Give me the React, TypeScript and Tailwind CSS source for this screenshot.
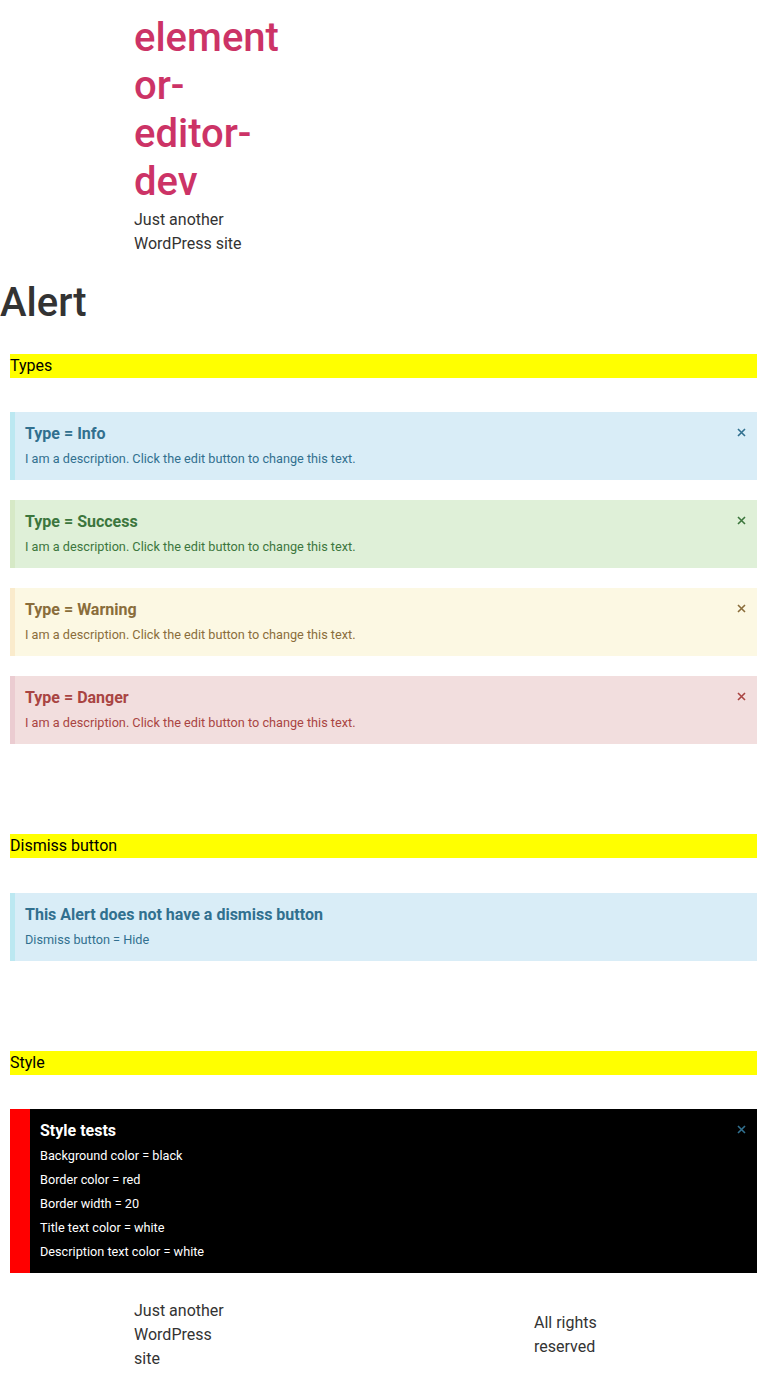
import React from 'react';

type AlertKind = 'info' | 'success' | 'warning' | 'danger';

const kinds: Record<AlertKind, { box: string; text: string }> = {
  info: { box: 'bg-[#d9edf7] border-[#bce8f1]', text: 'text-[#31708f]' },
  success: { box: 'bg-[#dff0d8] border-[#d6e9c6]', text: 'text-[#3c763d]' },
  warning: { box: 'bg-[#fcf8e3] border-[#faebcc]', text: 'text-[#8a6d3b]' },
  danger: { box: 'bg-[#f2dede] border-[#ebccd1]', text: 'text-[#a94442]' },
};

function Dismiss({ color }: { color: string }) {
  return (
    <button className={`absolute right-[11px] top-[16px] ${color}`} aria-label="Dismiss this alert.">
      <svg width="9" height="9" viewBox="0 0 9 9" className="block">
        <path d="M1 1 L8 8 M8 1 L1 8" stroke="currentColor" strokeWidth="1.6" strokeLinecap="butt" />
      </svg>
    </button>
  );
}

function Alert({
  kind,
  title,
  description,
  dismiss = true,
}: {
  kind: AlertKind;
  title: string;
  description: string;
  dismiss?: boolean;
}) {
  const k = kinds[kind];
  return (
    <div className={`relative mx-[10px] h-[68px] border-l-[5px] pl-[10px] pt-[11px] ${k.box} ${k.text}`}>
      <div className="text-[16px] font-bold leading-[22px]">{title}</div>
      <div className="mt-[4px] text-[12.7px] leading-[20px]">{description}</div>
      {dismiss && <Dismiss color={k.text} />}
    </div>
  );
}

function SectionBar({ label }: { label: string }) {
  return <div className="mx-[10px] h-[24px] bg-[#ffff00] text-[16px] leading-[24px] text-black">{label}</div>;
}

const desc = 'I am a description. Click the edit button to change this text.';

export default function App() {
  return (
    <div className="min-h-[1387px] bg-white font-['Roboto',sans-serif] text-[#333]">
      {/* Header */}
      <header className="pl-[134px] pt-[14px]">
        <div className="w-[150px]">
          <div className="break-words text-[40px] font-medium leading-[48px] text-[#cc3366]">elementor-editor-dev</div>
          <div className="mt-[2px] text-[16px] leading-[24px]">Just another WordPress site</div>
        </div>
      </header>

      <h1 className="mt-[23px] text-[40px] font-medium leading-[48px] text-[#333]">Alert</h1>

      <div className="mt-[27px]">
        <SectionBar label="Types" />
      </div>

      <div className="mt-[34px] flex flex-col gap-[20px]">
        <Alert kind="info" title="Type = Info" description={desc} />
        <Alert kind="success" title="Type = Success" description={desc} />
        <Alert kind="warning" title="Type = Warning" description={desc} />
        <Alert kind="danger" title="Type = Danger" description={desc} />
      </div>

      <div className="mt-[90px]">
        <SectionBar label="Dismiss button" />
      </div>

      <div className="mt-[35px]">
        <Alert kind="info" title="This Alert does not have a dismiss button" description="Dismiss button = Hide" dismiss={false} />
      </div>

      <div className="mt-[90px]">
        <SectionBar label="Style" />
      </div>

      <div className="relative mx-[10px] mt-[34px] h-[164px] border-l-[20px] border-[#ff0000] bg-black pl-[10px] pt-[11px] text-white">
        <div className="text-[16px] font-bold leading-[22px]">Style tests</div>
        <div className="mt-[4px] flex flex-col gap-[4px] text-[12.7px] leading-[20px]">
          <p>Background color = black</p>
          <p>Border color = red</p>
          <p>Border width = 20</p>
          <p>Title text color = white</p>
          <p>Description text color = white</p>
        </div>
        <Dismiss color="text-[#31708f]" />
      </div>

      {/* Footer */}
      <footer className="mt-[26px] flex items-center pb-[16px] pl-[134px] text-[16px] leading-[24px] text-[#333]">
        <div className="w-[95px]">Just another WordPress site</div>
        <div className="ml-[305px] w-[95px]">All rights reserved</div>
      </footer>
    </div>
  );
}
